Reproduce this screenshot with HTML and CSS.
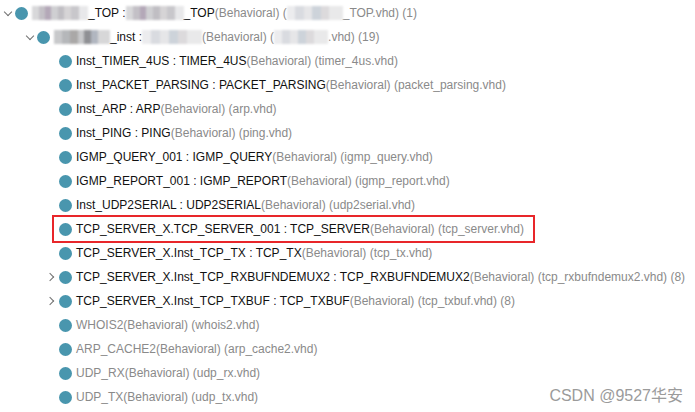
FILE: index.html
```html
<!DOCTYPE html>
<html>
<head>
<meta charset="utf-8">
<link rel="stylesheet" href="styles.css">
</head>
<body>
<ul class="tree">
  <li class="row l0"><span class="chev down"></span><span class="dot"></span><span class="blur w56"></span><span class="name">_TOP : </span><span class="blur w58"></span><span class="name">_TOP</span><span class="meta">(Behavioral) (</span><span class="blur w56 light"></span><span class="meta">_TOP.vhd) (1)</span></li>
  <li class="row l1"><span class="chev down"></span><span class="dot"></span><span class="blur w56 dark"></span><span class="name">_inst : </span><span class="blur w60 light"></span><span class="meta">(Behavioral) (</span><span class="blur w54 light"></span><span class="meta">.vhd) (19)</span></li>
  <li class="row l2"><span class="chev none"></span><span class="dot"></span><span class="name">Inst_TIMER_4US : TIMER_4US</span><span class="meta">(Behavioral) (timer_4us.vhd)</span></li>
  <li class="row l2"><span class="chev none"></span><span class="dot"></span><span class="name">Inst_PACKET_PARSING : PACKET_PARSING</span><span class="meta">(Behavioral) (packet_parsing.vhd)</span></li>
  <li class="row l2"><span class="chev none"></span><span class="dot"></span><span class="name">Inst_ARP : ARP</span><span class="meta">(Behavioral) (arp.vhd)</span></li>
  <li class="row l2"><span class="chev none"></span><span class="dot"></span><span class="name">Inst_PING : PING</span><span class="meta">(Behavioral) (ping.vhd)</span></li>
  <li class="row l2"><span class="chev none"></span><span class="dot"></span><span class="name">IGMP_QUERY_001 : IGMP_QUERY</span><span class="meta">(Behavioral) (igmp_query.vhd)</span></li>
  <li class="row l2"><span class="chev none"></span><span class="dot"></span><span class="name">IGMP_REPORT_001 : IGMP_REPORT</span><span class="meta">(Behavioral) (igmp_report.vhd)</span></li>
  <li class="row l2"><span class="chev none"></span><span class="dot"></span><span class="name">Inst_UDP2SERIAL : UDP2SERIAL</span><span class="meta">(Behavioral) (udp2serial.vhd)</span></li>
  <li class="row l2 marked"><span class="chev none"></span><span class="dot"></span><span class="name">TCP_SERVER_X.TCP_SERVER_001 : TCP_SERVER</span><span class="meta">(Behavioral) (tcp_server.vhd)</span><span class="mark"></span></li>
  <li class="row l2"><span class="chev none"></span><span class="dot"></span><span class="name">TCP_SERVER_X.Inst_TCP_TX : TCP_TX</span><span class="meta">(Behavioral) (tcp_tx.vhd)</span></li>
  <li class="row l2"><span class="chev right"></span><span class="dot"></span><span class="name">TCP_SERVER_X.Inst_TCP_RXBUFNDEMUX2 : TCP_RXBUFNDEMUX2</span><span class="meta">(Behavioral) (tcp_rxbufndemux2.vhd) (8)</span></li>
  <li class="row l2"><span class="chev right"></span><span class="dot"></span><span class="name">TCP_SERVER_X.Inst_TCP_TXBUF : TCP_TXBUF</span><span class="meta">(Behavioral) (tcp_txbuf.vhd) (8)</span></li>
  <li class="row l2"><span class="chev none"></span><span class="dot"></span><span class="meta">WHOIS2(Behavioral) (whois2.vhd)</span></li>
  <li class="row l2"><span class="chev none"></span><span class="dot"></span><span class="meta">ARP_CACHE2(Behavioral) (arp_cache2.vhd)</span></li>
  <li class="row l2"><span class="chev none"></span><span class="dot"></span><span class="meta">UDP_RX(Behavioral) (udp_rx.vhd)</span></li>
  <li class="row l2"><span class="chev none"></span><span class="dot"></span><span class="meta">UDP_TX(Behavioral) (udp_tx.vhd)</span></li>
</ul>
<div class="watermark">CSDN @9527华安</div>
</body>
</html>
```
FILE: styles.css
```css
html, body {
  margin: 0;
  padding: 0;
  background: #ffffff;
  width: 695px;
  height: 412px;
  overflow: hidden;
  position: relative;
  font-family: "Liberation Sans", Arial, sans-serif;
  font-size: 12px;
}
.tree {
  list-style: none;
  margin: 0;
  padding: 1px 0 0 0;
}
.row {
  height: 24px;
  display: flex;
  align-items: center;
  white-space: nowrap;
  position: relative;
}
.l0 { padding-left: 3px; }
.l1 { padding-left: 25px; }
.l2 { padding-left: 47px; }
.chev {
  width: 10px;
  height: 10px;
  flex: none;
  position: relative;
  margin-right: 2px;
}
.chev.down::before,
.chev.right::before {
  content: "";
  position: absolute;
  width: 5px;
  height: 5px;
  border-right: 1.3px solid #707070;
  border-bottom: 1.3px solid #707070;
}
.chev.down::before {
  left: 2px;
  top: 1px;
  transform: rotate(45deg);
}
.chev.right::before {
  left: 0px;
  top: 2px;
  transform: rotate(-45deg);
}
.dot {
  width: 13px;
  height: 13px;
  border-radius: 50%;
  background: #4996ae;
  flex: none;
  margin-right: 4px;
}
.name { color: #111111; }
.meta { color: #8a8a8a; }
.blur {
  display: inline-block;
  height: 14px;
  flex: none;
  filter: blur(1.2px);
  background: linear-gradient(90deg,
    #d8d8da 0 12%, #c3c0c6 12% 24%, #b4a8b8 24% 34%, #cfcfd2 34% 46%,
    #c0bec3 46% 58%, #d6d4d6 58% 70%, #c8c7cb 70% 84%, #e8e8ea 84% 100%);
}
.blur.dark {
  background: linear-gradient(90deg,
    #c8c9cb 0 14%, #b5b7ba 14% 28%, #aaa8a7 28% 42%, #c7c8ca 42% 54%,
    #8f9094 54% 66%, #b1b6c0 66% 78%, #d7d7d8 78% 100%);
}
.blur.light {
  background: linear-gradient(90deg,
    #ececee 0 15%, #d9dbe0 15% 30%, #e6e6e8 30% 45%, #cdd3da 45% 60%,
    #dcdadc 60% 75%, #e9e9ea 75% 100%);
}
.w56 { width: 56px; }
.w58 { width: 58px; }
.w54 { width: 54px; }
.w60 { width: 60px; }
.mark {
  position: absolute;
  left: 52px;
  top: -2px;
  width: 483px;
  height: 28px;
  border: 2px solid #e8262a;
  box-sizing: border-box;
}
.watermark {
  position: absolute;
  right: 12px;
  top: 382px;
  font-family: "Liberation Sans", "Noto Sans CJK SC", sans-serif;
  font-size: 16px;
  color: #9b9b9b;
}
```
